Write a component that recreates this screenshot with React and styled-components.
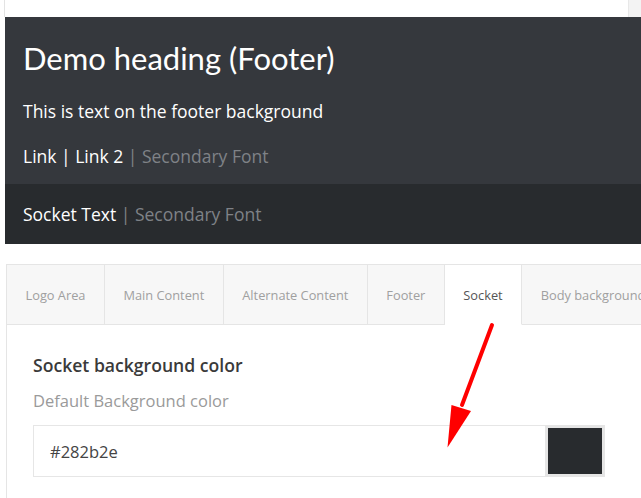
import React from "react";
import styled, { createGlobalStyle } from "styled-components";

const Global = createGlobalStyle`
  html, body { margin: 0; padding: 0; background: #fff; }
  body { font-family: "Open Sans", "Noto Sans", sans-serif; width: 641px; height: 498px; overflow: hidden; position: relative; }
`;

const Page = styled.div`
  position: relative;
  width: 641px;
  height: 498px;
  overflow: hidden;
`;

const TopStrip = styled.div`
  display: flex;
  height: 17px;
  padding-left: 4px;
`;

const TopBox = styled.div`
  flex: 1;
  background: #fff;
  border-left: 1px solid #e3e3e3;
`;

const TopSide = styled.div`
  width: 12px;
  background: #f3f3f3;
  border-left: 1px solid #e8e8e8;
`;

const Preview = styled.div`
  margin-left: 5px;
  display: flex;
  flex-direction: column;
`;

const FooterArea = styled.div`
  background: #35383d;
  height: 167px;
  padding: 22px 0 0 18px;
  box-sizing: border-box;
`;

const Heading = styled.h2`
  margin: 0;
  font-family: Lato, "Open Sans", sans-serif;
  font-weight: 400;
  font-size: 31px;
  line-height: 38px;
  color: #fff;
`;

const FooterText = styled.p`
  margin: 22px 0 0;
  font-size: 17.5px;
  line-height: 24px;
  color: #fff;
`;

const LinkRow = styled.div`
  margin-top: 21px;
  font-size: 17.5px;
  line-height: 24px;
  color: #fff;
`;

const Secondary = styled.span`
  color: #7f8287;
`;

const SocketArea = styled.div`
  background: #282b2e;
  height: 60px;
  display: flex;
  align-items: center;
  padding-left: 18px;
  font-size: 17.5px;
  color: #fff;
  white-space: pre;
`;

const Settings = styled.div`
  margin: 20px 0 0 6px;
  border-top: 1px solid #e5e5e5;
  border-left: 1px solid #e5e5e5;
`;

const TabBar = styled.div`
  display: flex;
  height: 60px;
  white-space: nowrap;
`;

const Tab = styled.div`
  display: flex;
  align-items: center;
  padding: 0 18.5px;
  font-size: 12.8px;
  color: ${(p) => (p.$active ? "#555" : "#a0a0a0")};
  background: ${(p) => (p.$active ? "#fff" : "#f7f7f7")};
  border-right: 1px solid #e5e5e5;
  border-bottom: 1px solid ${(p) => (p.$active ? "#fff" : "#e5e5e5")};
  flex-shrink: 0;
`;

const Panel = styled.div`
  padding: 28px 0 0 26px;
  height: 200px;
`;

const FieldTitle = styled.div`
  font-size: 17.6px;
  font-weight: 600;
  color: #3a3a3a;
  line-height: 24px;
`;

const FieldDesc = styled.div`
  margin-top: 12px;
  font-size: 16.5px;
  color: #9a9a9a;
  line-height: 24px;
`;

const InputRow = styled.div`
  margin-top: 12px;
  display: flex;
  width: 572px;
  height: 52px;
  border: 1px solid #e6e6e6;
  box-sizing: border-box;
`;

const Input = styled.div`
  flex: 1;
  display: flex;
  align-items: center;
  padding-left: 16px;
  font-size: 16.5px;
  color: #444;
  background: #fff;
`;

const Swatch = styled.div`
  width: 60px;
  background: #e5e5e5;
  padding: 3px;
  box-sizing: border-box;
  display: flex;
  margin: -1px -1px -1px 0;
`;

const SwatchColor = styled.div`
  flex: 1;
  background: #282b2e;
`;

const Arrow = styled.svg`
  position: absolute;
  left: 0;
  top: 0;
  pointer-events: none;
`;

const tabs = ["Logo Area", "Main Content", "Alternate Content", "Footer", "Socket", "Body background"];

export default function App() {
  return (
    <Page>
      <Global />
      <TopStrip>
        <TopBox />
        <TopSide />
      </TopStrip>
      <Preview>
        <FooterArea>
          <Heading>Demo heading (Footer)</Heading>
          <FooterText>This is text on the footer background</FooterText>
          <LinkRow>
            Link | Link 2 <Secondary>| Secondary Font</Secondary>
          </LinkRow>
        </FooterArea>
        <SocketArea>
          Socket Text <Secondary>| Secondary Font</Secondary>
        </SocketArea>
      </Preview>
      <Settings>
        <TabBar>
          {tabs.map((t) => (
            <Tab key={t} $active={t === "Socket"}>{t}</Tab>
          ))}
        </TabBar>
        <Panel>
          <FieldTitle>Socket background color</FieldTitle>
          <FieldDesc>Default Background color</FieldDesc>
          <InputRow>
            <Input>#282b2e</Input>
            <Swatch><SwatchColor /></Swatch>
          </InputRow>
        </Panel>
      </Settings>
      <Arrow width="641" height="498" viewBox="0 0 641 498">
        <line x1="492" y1="325" x2="462" y2="405" stroke="#ff0000" strokeWidth="4" strokeLinecap="round" />
        <polygon points="451.5,405 471,411 447.5,447.5" fill="#ff0000" />
      </Arrow>
    </Page>
  );
}
